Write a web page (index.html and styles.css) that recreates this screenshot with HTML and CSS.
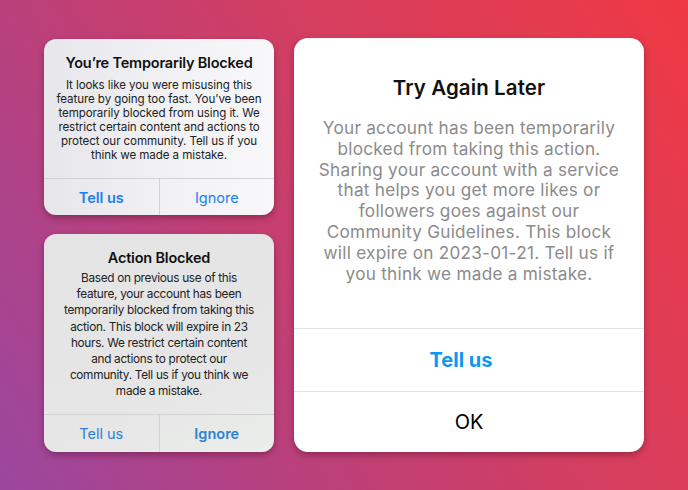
FILE: index.html
```html
<!DOCTYPE html>
<html lang="en">
<head>
    <meta charset="UTF-8">
    <meta name="viewport" content="width=device-width, initial-scale=1.0">
    <title>Action Blocked Alerts</title>
    <link rel="stylesheet" href="styles.css">
</head>
<body>
    <div class="stage">
        <div class="left-column">
            <div class="alert alert-small alert-blocked">
                <div class="alert-body">
                    <h2 class="alert-title">You’re Temporarily Blocked</h2>
                    <p class="alert-text">It looks like you were misusing this<br>feature by going too fast. You’ve been<br>temporarily blocked from using it. We<br>restrict certain content and actions to<br>protect our community. Tell us if you<br>think we made a mistake.</p>
                </div>
                <div class="alert-actions">
                    <button class="action action-bold">Tell us</button>
                    <button class="action">Ignore</button>
                </div>
            </div>
            <div class="alert alert-small alert-action">
                <div class="alert-body">
                    <h2 class="alert-title">Action Blocked</h2>
                    <p class="alert-text">Based on previous use of this<br>feature, your account has been<br>temporarily blocked from taking this<br>action. This block will expire in 23<br>hours. We restrict certain content<br>and actions to protect our<br>community. Tell us if you think we<br>made a mistake.</p>
                </div>
                <div class="alert-actions">
                    <button class="action">Tell us</button>
                    <button class="action action-bold">Ignore</button>
                </div>
            </div>
        </div>
        <div class="alert alert-large">
            <div class="alert-body">
                <h2 class="alert-title">Try Again Later</h2>
                <p class="alert-text">Your account has been temporarily<br>blocked from taking this action.<br>Sharing your account with a service<br>that helps you get more likes or<br>followers goes against our<br>Community Guidelines. This block<br>will expire on 2023-01-21. Tell us if<br>you think we made a mistake.</p>
            </div>
            <button class="large-action large-primary">Tell us</button>
            <button class="large-action">OK</button>
        </div>
    </div>
</body>
</html>
```

FILE: styles.css
```css
html, body {
    margin: 0;
    width: 688px;
    height: 490px;
    overflow: hidden;
}
body {
    background: linear-gradient(58deg, #9b479f 0%, #c03f74 38%, #d83e5c 65%, #ef3944 100%);
    font-family: Inter, "Noto Sans", sans-serif;
    -webkit-font-smoothing: antialiased;
}
.stage {
    display: flex;
    gap: 20px;
    padding: 38px 0 0 44px;
}
.left-column {
    display: flex;
    flex-direction: column;
    gap: 19px;
    width: 230px;
    padding-top: 1px;
}
.alert {
    display: flex;
    flex-direction: column;
    text-align: center;
    box-shadow: 0 3px 6px rgba(60, 0, 30, 0.35);
    overflow: hidden;
}
.alert-title {
    margin: 0;
    font-weight: 600;
    color: #111;
}
.alert-text {
    margin: 0;
}

/* small iOS style alerts */
.alert-small {
    border-radius: 12px;
    color: #222;
}
.alert-blocked {
    height: 176px;
    background: linear-gradient(90deg, #e6e6eb 0%, #f1f1f4 50%, #f8f8fa 100%);
}
.alert-action {
    height: 218px;
    background: linear-gradient(160deg, #e4e4e4 0%, #e6e6e6 70%, #eaeeea 100%);
}
.alert-small .alert-body {
    flex: 1;
    padding-top: 15px;
}
.alert-small .alert-title {
    font-size: 14.5px;
    line-height: 18px;
    letter-spacing: -0.2px;
}
.alert-blocked .alert-text {
    margin-top: 6px;
    font-size: 11.6px;
    line-height: 14px;
    letter-spacing: -0.1px;
}
.alert-action .alert-text {
    margin-top: 3px;
    font-size: 11.8px;
    line-height: 16.2px;
    letter-spacing: -0.3px;
}
.alert-actions {
    display: flex;
    border-top: 1px solid #d2d2d6;
}
.alert-blocked .alert-actions {
    height: 36px;
}
.alert-action .alert-actions {
    height: 37px;
}
.action {
    flex: 1;
    border: none;
    background: none;
    font-family: inherit;
    font-size: 14.5px;
    color: #1b7ff0;
    padding: 0;
}
.alert-action .action {
    color: #2f80d6;
}
.action + .action {
    border-left: 1px solid #d2d2d6;
}
.action-bold {
    font-weight: 600;
}

/* large instagram alert */
.alert-large {
    width: 350px;
    height: 414px;
    border-radius: 14px;
    background: #fff;
}
.alert-large .alert-body {
    flex: 1;
    padding-top: 38px;
}
.alert-large .alert-title {
    font-size: 20.5px;
    line-height: 24px;
    letter-spacing: 0.1px;
}
.alert-large .alert-text {
    margin-top: 18px;
    font-size: 17.2px;
    line-height: 20.8px;
    color: #8b8b8b;
    letter-spacing: 0.25px;
}
.large-action {
    height: 63px;
    border: none;
    border-top: 1px solid #e3e3e3;
    background: none;
    font-family: inherit;
    font-size: 20px;
    color: #000;
    padding: 0;
}
.large-action + .large-action {
    height: 61px;
}
.large-primary {
    padding-right: 16px;
    font-weight: 700;
    color: #0a98f3;
}
```
